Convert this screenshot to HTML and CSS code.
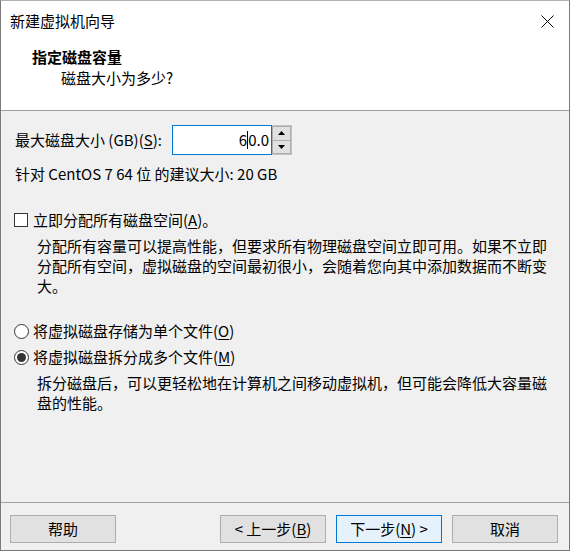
FILE: index.html
```html
<!DOCTYPE html>
<html lang="zh-CN">
<head>
<meta charset="utf-8">
<title>新建虚拟机向导</title>
<link rel="stylesheet" href="styles.css">
</head>
<body>
<div class="window">
  <div class="header">
    <div class="titlebar">
      <span class="title">新建虚拟机向导</span>
      <svg class="close" width="13" height="13" viewBox="0 0 13 13"><path d="M0.5 0.5 L12.5 12.5 M12.5 0.5 L0.5 12.5" stroke="#000" stroke-width="1" fill="none"/></svg>
    </div>
    <div class="heading">指定磁盘容量</div>
    <div class="subheading">磁盘大小为多少?</div>
  </div>
  <div class="content">
    <div class="size-row">
      <span class="label">最大磁盘大小 (GB)(<u>S</u>):</span>
      <div class="spinbox">
        <div class="spin-input"><span>6</span><span class="caret"></span><span>0.0</span></div>
        <div class="spin-buttons">
          <div class="spin-btn"><svg width="7" height="4" viewBox="0 0 7 4"><path d="M3.5 0 L7 4 L0 4 Z" fill="#000"/></svg></div>
          <div class="spin-btn"><svg width="7" height="4" viewBox="0 0 7 4"><path d="M0 0 L7 0 L3.5 4 Z" fill="#000"/></svg></div>
        </div>
      </div>
    </div>
    <div class="hint">针对 CentOS 7 64 位 的建议大小: 20 GB</div>
    <div class="option check-row"><span class="checkbox"></span><span>立即分配所有磁盘空间(<u>A</u>)。</span></div>
    <p class="desc first-desc">分配所有容量可以提高性能，但要求所有物理磁盘空间立即可用。如果不立即分配所有空间，虚拟磁盘的空间最初很小，会随着您向其中添加数据而不断变大。</p>
    <div class="option radio-row first-radio"><span class="radio"></span><span>将虚拟磁盘存储为单个文件(<u>O</u>)</span></div>
    <div class="option radio-row second-radio"><span class="radio checked"></span><span>将虚拟磁盘拆分成多个文件(<u>M</u>)</span></div>
    <p class="desc">拆分磁盘后，可以更轻松地在计算机之间移动虚拟机，但可能会降低大容量磁盘的性能。</p>
  </div>
  <div class="footer">
    <button class="btn">帮助</button>
    <div class="spacer"></div>
    <button class="btn">&lt; 上一步(<u>B</u>)</button>
    <button class="btn default">下一步(<u>N</u>) &gt;</button>
    <button class="btn">取消</button>
  </div>
</div>
</body>
</html>
```
FILE: styles.css
```css
* { box-sizing: border-box; }
html, body { margin: 0; padding: 0; }
body {
  font-family: "Noto Sans CJK SC", "Noto Sans", sans-serif;
  font-size: 15px;
  color: #000;
  background: #fff;
}
.window {
  width: 570px;
  height: 551px;
  border: 1px solid #7a7a7a;
  border-top-color: #b0b0b0;
  display: flex;
  flex-direction: column;
  background: #f0f0f0;
}
.header {
  height: 110px;
  flex: none;
  background: #fff;
  border-bottom: 1px solid #a0a0a0;
}
.titlebar {
  height: 40px;
  display: flex;
  align-items: center;
  justify-content: space-between;
  padding: 0 15px 0 9px;
  line-height: 20px;
}
.close { display: block; }
.heading {
  font-weight: bold;
  margin-left: 31px;
  margin-top: 6px;
  line-height: 20px;
}
.subheading {
  margin-left: 60px;
  margin-top: 1px;
  line-height: 20px;
}
.content {
  height: 392px;
  flex: none;
  border-bottom: 1px solid #a0a0a0;
  padding: 14px 0 0 13px;
  line-height: 20px;
}
.size-row {
  display: flex;
  align-items: center;
  height: 30px;
}
.label { margin-left: 1px; width: 157px; }
.spinbox { display: flex; height: 30px; }
.spin-input {
  width: 100px;
  height: 30px;
  border: 1px solid #0078d7;
  background: #fff;
  display: flex;
  align-items: center;
  justify-content: flex-end;
  padding-right: 2px;
}
.caret {
  width: 1px;
  height: 18px;
  background: #000;
}
.spin-buttons {
  width: 20px;
  height: 30px;
  display: flex;
  flex-direction: column;
  border: 1px solid #c4c4c4;
  border-left: none;
  background: #fff;
}
.spin-btn {
  flex: 1;
  display: flex;
  align-items: center;
  justify-content: center;
  background: #e1e1e1;
  border: 1px solid #adadad;
  margin: 0;
}
.spin-btn + .spin-btn { border-top: none; }
.hint { margin-top: 9px; margin-left: 1px; }
.option {
  display: flex;
  align-items: center;
  height: 20px;
}
.check-row { margin-top: 26px; }
.checkbox {
  width: 14px;
  height: 14px;
  border: 1px solid #333;
  background: #fff;
  margin-right: 5px;
  flex: none;
}
.radio {
  width: 15px;
  height: 15px;
  border: 1px solid #333;
  border-radius: 50%;
  background: #fff;
  margin-right: 4px;
  flex: none;
  display: flex;
  align-items: center;
  justify-content: center;
}
.radio.checked::after {
  content: "";
  width: 9px;
  height: 9px;
  border-radius: 50%;
  background: #333;
}
.desc {
  margin: 6px 8px 0 23px;
  line-height: 20px;
}
.first-radio { margin-top: 25px; }
.second-radio { margin-top: 6px; }
.footer {
  flex: 1;
  display: flex;
  align-items: flex-start;
  padding: 12px 11px 0 9px;
  gap: 10px;
}
.spacer { flex: 1; }
.btn {
  width: 106px;
  height: 28px;
  border: 1px solid #adadad;
  background: #e1e1e1;
  font-family: inherit;
  font-size: 15px;
  color: #000;
  padding: 0;
  line-height: 20px;
}
.btn.default {
  border-color: #0078d7;
  background: #e5f1fb;
}
u { text-underline-offset: 2px; }
```
